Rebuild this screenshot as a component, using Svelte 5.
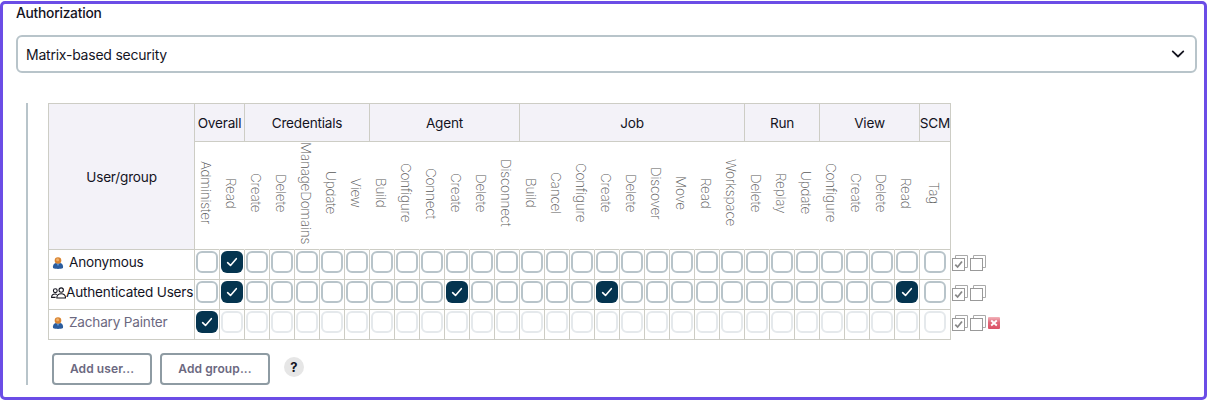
<script>
  const groups = [
    { name: 'Overall', perms: ['Administer', 'Read'] },
    { name: 'Credentials', perms: ['Create', 'Delete', 'ManageDomains', 'Update', 'View'] },
    { name: 'Agent', perms: ['Build', 'Configure', 'Connect', 'Create', 'Delete', 'Disconnect'] },
    { name: 'Job', perms: ['Build', 'Cancel', 'Configure', 'Create', 'Delete', 'Discover', 'Move', 'Read', 'Workspace'] },
    { name: 'Run', perms: ['Delete', 'Replay', 'Update'] },
    { name: 'View', perms: ['Configure', 'Create', 'Delete', 'Read'] },
    { name: 'SCM', perms: ['Tag'] }
  ];
  const perms = groups.flatMap((g) => g.perms.map((p) => ({ id: `${g.name}.${p}`, label: p })));

  let rows = $state([
    { name: 'Anonymous', icon: 'user', granted: ['Overall.Read'] },
    { name: 'Authenticated Users', icon: 'people', granted: ['Overall.Read', 'Agent.Create', 'Job.Create', 'View.Read'] },
    { name: 'Zachary Painter', icon: 'user', removable: true, granted: ['Overall.Administer'] }
  ]);
</script>

<main class="frame">
  <h1>Authorization</h1>
  <div class="select">
    <span>Matrix-based security</span>
    <svg width="14" height="8" viewBox="0 0 14 8"><path d="M1.700 1.400 7 6.500l5.300-5.100" fill="none" stroke="#14141f" stroke-width="1.750" stroke-linecap="round" stroke-linejoin="round" /></svg>
  </div>

  <section class="nested">
    <div class="matrix-row">
      <div class="matrix">
        <div class="cell head corner">User/group</div>
        {#each groups as g}
          <div class="cell head" style="grid-column: span {g.perms.length}">{g.name}</div>
        {/each}
        {#each perms as p, i}
          <div class="cell perm" class:merged={i < perms.length - 1}><span>{p.label}</span></div>
        {/each}
        {#each rows as row}
          <div class="cell name" class:muted={row.removable}>
            {#if row.icon === 'user'}
              <svg class="user" width="12" height="12" viewBox="0 0 12 12">
                <path d="M1 11V9.300C1 7.300 2.700 6.100 4 6h4c1.500.1 3 1.300 3 3.300V11c-2.500 1.200-7.500 1.200-10 0z" fill="#2b5d9e" />
                <path d="M4.200 6h3.600L6 9.300z" fill="#5b94d6" />
                <circle cx="6" cy="3.500" r="3.300" fill="#d98432" />
                <circle cx="5.600" cy="2.700" r="1.500" fill="#eeb06b" />
              </svg>
            {:else}
              <svg class="people" width="15" height="12" viewBox="0 0 15 12" fill="none" stroke="#14141f" stroke-width="1.100" stroke-linejoin="round">
                <circle cx="4.300" cy="3.700" r="1.900" />
                <circle cx="10.200" cy="3.100" r="2.200" />
                <path d="M5.800 11c0-2.700 1.600-4.300 4.400-4.300s4.300 1.600 4.300 4.300z" />
                <path d="M5.800 7.600C5.300 7.200 4.800 7 4.200 7 2 7 .6 8.300.6 10.400h4" />
              </svg>
            {/if}
            <span>{row.name}</span>
          </div>
          {#each perms as p}
            <div class="cell check">
              <div class="box" class:on={row.granted.includes(p.id)} class:disabled={row.removable && !row.granted.includes(p.id)}>
                {#if row.granted.includes(p.id)}
                  <svg width="22" height="22" viewBox="0 0 22 22"><path d="M6.600 11.700 9.500 14.400 15.300 7.700" fill="none" stroke="#fff" stroke-width="1.600" stroke-linecap="round" stroke-linejoin="round" /></svg>
                {/if}
              </div>
            </div>
          {/each}
        {/each}
      </div>
      <div class="actions">
        {#each rows as row}
          <div class="action">
            {#each [true, false] as checked}
              <svg width="16" height="16" viewBox="0 0 16 16" fill="none" stroke="#999">
                <path d="M3.500 3V.5h12v12H13" stroke="#aaa" />
                <rect x=".5" y="3.500" width="12" height="12" fill="#fff" />
                {#if checked}<path d="M3.300 9.600 5.600 12 10 6.500" stroke="#888" stroke-width="1.800" />{/if}
              </svg>
            {/each}
            {#if row.removable}
              <svg width="12" height="12" viewBox="0 0 12 12">
                <defs><linearGradient id="red" x1="0" y1="0" x2="0" y2="1"><stop offset="0" stop-color="#f3b4bb" /><stop offset=".45" stop-color="#e0697a" /><stop offset="1" stop-color="#dc5266" /></linearGradient></defs>
                <rect width="12" height="12" rx="1" fill="url(#red)" />
                <path d="m3.200 3.500 5.600 5m0-5L3.200 8.500" stroke="#fff" stroke-width="1.800" />
              </svg>
            {/if}
          </div>
        {/each}
      </div>
    </div>
    <div class="buttons">
      <button class="add user-btn">Add user...</button>
      <button class="add group-btn">Add group...</button>
      <span class="help">?</span>
    </div>
  </section>
</main>

<style>
  :global(body) { background: #fff; }
  .frame {
    box-sizing: border-box;
    width: 1207px;
    height: 399px;
    margin-top: 1px;
    border: 3px solid #6b4de6;
    border-radius: 5px;
    padding: 0 7px 0 13px;
    font-family: Inter, sans-serif;
    font-size: 14px;
    color: #14141f;
    overflow: hidden;
  }
  h1 { margin: 0; font-size: 13.8px; font-weight: 500; line-height: 18px; letter-spacing: -0.25px; }
  .select {
    box-sizing: border-box;
    display: flex;
    align-items: center;
    justify-content: space-between;
    width: 1181px;
    height: 38px;
    margin-top: 13px;
    padding: 0 10px 0 8px;
    border: 2px solid #b8c4ca;
    border-radius: 6px;
    letter-spacing: -0.23px;
  }
  .nested {
    box-sizing: border-box;
    height: 282px;
    margin: 30px 0 0 10px;
    padding-left: 20px;
    border-left: 2px solid #b8c4ca;
  }
  .matrix-row { display: flex; }
  .matrix {
    display: grid;
    grid-template-columns: 146px repeat(29, 25px) 31px;
    grid-template-rows: 38px 108px repeat(3, 30px);
    border: solid #cdcdc5;
    border-width: 1px 0 0 1px;
    font-size: 13.6px;
    letter-spacing: -0.2px;
  }
  .cell {
    box-sizing: border-box;
    min-width: 0;
    display: flex;
    align-items: center;
    justify-content: center;
    border: solid #cdcdc5;
    border-width: 0 1px 1px 0;
    white-space: nowrap;
  }
  .head { background: #f3f2f8; }
  .corner { grid-row: span 2; }
  .perm.merged { border-right-color: transparent; }
  .perm span {
    writing-mode: vertical-rl;
    font-weight: 200;
    line-height: 20px;
    letter-spacing: -0.25px;
    color: #5a5a5a;
    margin: 0 0 5px -2px;
  }
  .name { justify-content: flex-start; padding: 0 0 5px 2px; }
  .name.muted { color: #6b6880; }
  .user { margin: 1px 5px 0 1px; }
  .people { margin-top: 2px; }
  .name svg { flex: none; }
  .check { align-items: flex-start; padding-top: 1px; }
  .box {
    box-sizing: border-box;
    flex: none;
    width: 22px;
    height: 22px;
    border: 2px solid #b8c4ca;
    border-radius: 6px;
  }
  .box.on { border: 0; background: #04344f; }
  .box.disabled { border-color: #e5e9ec; }
  .box svg { display: block; }
  .actions { padding: 147px 0 0 1px; }
  .action { display: flex; align-items: center; gap: 2px; height: 26px; padding-bottom: 4px; }
  .buttons { display: flex; align-items: flex-start; padding: 13px 0 0 4px; }
  .add {
    box-sizing: border-box;
    height: 32px;
    margin: 0 8px 0 0;
    padding: 0;
    border: 2px solid #8e9ba3;
    border-radius: 4px;
    background: #fff;
    font: 600 12px/28px Inter, sans-serif;
    letter-spacing: 0.1px;
    color: #6b6880;
  }
  .user-btn { width: 100px; }
  .group-btn { width: 110px; }
  .help {
    width: 20px;
    height: 20px;
    margin: 4px 0 0 6px;
    border-radius: 50%;
    background: #e6e6e6;
    text-align: center;
    font-size: 13px;
    font-weight: 700;
    line-height: 20px;
  }
</style>
